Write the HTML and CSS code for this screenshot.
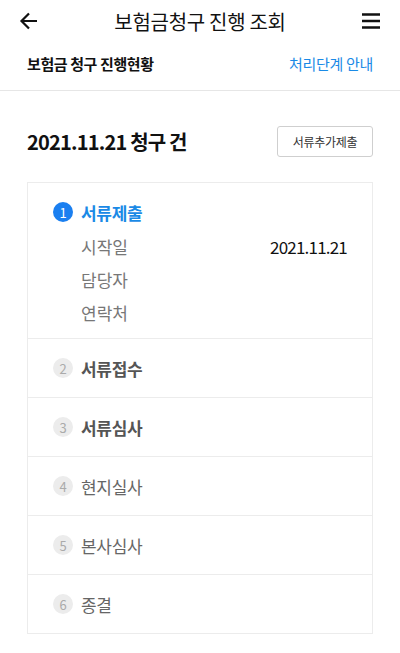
FILE: index.html
```html
<!DOCTYPE html>
<html>
<head>
  <title>보험금청구 진행 조회</title>
  <link rel="stylesheet" href="styles.css">
</head>
<body>
  <header class="topbar">
    <svg class="icon" width="22" height="22" viewBox="0 0 22 22">
      <path d="M19 11H4M11 3.5L3.5 11L11 18.5" fill="none" stroke="#111" stroke-width="2.2"/>
    </svg>
    <h1>보험금청구 진행 조회</h1>
    <svg class="icon" width="22" height="22" viewBox="0 0 22 22">
      <path d="M2 4.5H20M2 11H20M2 17.5H20" stroke="#111" stroke-width="2.4"/>
    </svg>
  </header>

  <div class="subbar">
    <span class="subtitle">보험금 청구 진행현황</span>
    <a class="guide">처리단계 안내</a>
  </div>

  <main class="content">
    <div class="claim-head">
      <h2>2021.11.21 청구 건</h2>
      <button class="btn">서류추가제출</button>
    </div>

    <ul class="steps">
      <li class="step active">
        <div class="step-title"><span class="num">1</span>서류제출</div>
        <dl class="info">
          <div><dt>시작일</dt><dd>2021.11.21</dd></div>
          <div><dt>담당자</dt><dd></dd></div>
          <div><dt>연락처</dt><dd></dd></div>
        </dl>
      </li>
      <li class="step bold"><div class="step-title"><span class="num">2</span>서류접수</div></li>
      <li class="step bold"><div class="step-title"><span class="num">3</span>서류심사</div></li>
      <li class="step"><div class="step-title"><span class="num">4</span>현지실사</div></li>
      <li class="step"><div class="step-title"><span class="num">5</span>본사심사</div></li>
      <li class="step"><div class="step-title"><span class="num">6</span>종결</div></li>
    </ul>
  </main>
</body>
</html>
```

FILE: styles.css
```css
body {
  margin: 0;
  font-family: "Noto Sans CJK KR", "Noto Sans", sans-serif;
  color: #111;
  background: #fff;
}
.topbar {
  display: flex;
  align-items: center;
  justify-content: space-between;
  height: 42px;
  padding: 0 18px;
}
.topbar h1 {
  margin: 0;
  font-size: 20px;
  font-weight: 400;
  letter-spacing: -0.3px;
}
.icon { display: block; }
.subbar {
  display: flex;
  align-items: center;
  justify-content: space-between;
  line-height: 20px;
  padding: 12px 27px 16px;
  border-bottom: 1px solid #e6e6e6;
}
.subtitle {
  font-size: 15px;
  font-weight: 700;
  letter-spacing: -0.4px;
}
.guide {
  font-size: 15px;
  color: #1a8ae6;
  letter-spacing: -0.3px;
}
.content {
  padding: 35px 27px 0;
}
.claim-head {
  display: flex;
  align-items: center;
  justify-content: space-between;
  height: 31px;
}
.claim-head h2 {
  margin: 0;
  font-size: 20px;
  font-weight: 700;
  letter-spacing: -0.8px;
}
.btn {
  width: 96px;
  height: 31px;
  background: #fff;
  border: 1px solid #cfcfcf;
  border-radius: 3px;
  font-family: inherit;
  font-size: 12px;
  color: #333;
  letter-spacing: -0.3px;
  padding: 0;
}
.steps {
  list-style: none;
  margin: 25px 0 0;
  padding: 0;
  border: 1px solid #ececec;
}
.step {
  border-top: 1px solid #ececec;
  padding: 0 25px;
}
.step:first-child { border-top: none; }
.step-title {
  display: flex;
  align-items: center;
  height: 58px;
  font-size: 17px;
  color: #666;
  letter-spacing: -0.3px;
}
.step.bold .step-title {
  font-weight: 700;
  color: #555;
}
.num {
  width: 20px;
  height: 20px;
  border-radius: 50%;
  background: #ececec;
  color: #aaa;
  font-size: 13px;
  font-weight: 400;
  display: flex;
  align-items: center;
  justify-content: center;
  margin-right: 8px;
}
.step.active { padding-top: 2px; padding-bottom: 9px; }
.step.active .step-title {
  height: 54px;
  color: #1a8ae6;
  font-weight: 700;
}
.step.active .num {
  background: #1a7ff0;
  color: #fff;
}
.info {
  margin: -9px 0 0 28px;
}
.info div {
  display: flex;
  justify-content: space-between;
  align-items: center;
  height: 33px;
  line-height: 24px;
}
.info dt {
  font-size: 17px;
  color: #777;
}
.info dd {
  margin: 0;
  font-size: 17px;
  color: #111;
  letter-spacing: -0.8px;
}
```
